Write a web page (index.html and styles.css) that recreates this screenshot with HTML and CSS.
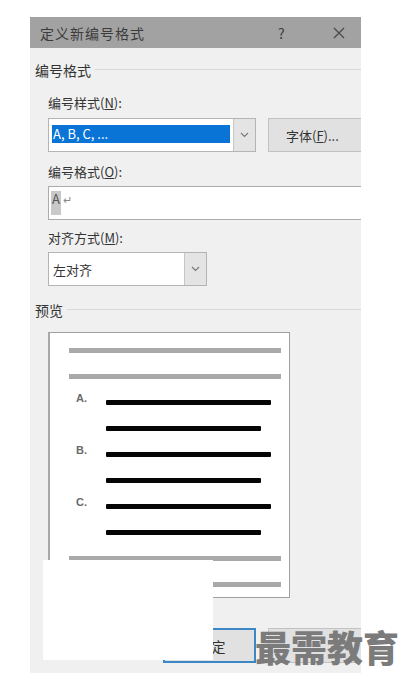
FILE: index.html
```html
<!DOCTYPE html>
<html lang="zh-CN">
<head>
    <meta charset="UTF-8">
    <meta name="viewport" content="width=device-width, initial-scale=1.0">
    <title>定义新编号格式</title>
    <link rel="stylesheet" href="styles.css">
</head>
<body>

<div class="page">
    <div class="dialog">
        <div class="titlebar">
            <span class="title">定义新编号格式</span>
            <span class="help">?</span>
            <svg class="close" width="12" height="12" viewBox="0 0 12 12">
                <path d="M1 1 L11 11 M11 1 L1 11" stroke="#4a4a4a" stroke-width="1.3" fill="none"/>
            </svg>
        </div>

        <div class="group-head">
            <span>编号格式</span>
            <div class="group-line"></div>
        </div>

        <div class="label label-first">编号样式(<u>N</u>):</div>
        <div class="row">
            <div class="combo combo-wide">
                <div class="combo-value"><span class="selected">A, B, C, ...</span></div>
                <div class="combo-btn">
                    <svg width="9" height="6" viewBox="0 0 9 6"><polyline points="1,1 4.5,4.5 8,1" stroke="#7a7a7a" stroke-width="1.2" fill="none"/></svg>
                </div>
            </div>
            <div class="btn font-btn">字体(<u>F</u>)...</div>
        </div>

        <div class="label">编号格式(<u>O</u>):</div>
        <div class="text-box"><span class="hl">A</span><span class="ret">↵</span></div>

        <div class="label label-tight">对齐方式(<u>M</u>):</div>
        <div class="combo combo-narrow">
            <div class="combo-value plain">左对齐</div>
            <div class="combo-btn">
                <svg width="9" height="6" viewBox="0 0 9 6"><polyline points="1,1 4.5,4.5 8,1" stroke="#7a7a7a" stroke-width="1.2" fill="none"/></svg>
            </div>
        </div>

        <div class="group-head preview-head">
            <span>预览</span>
            <div class="group-line"></div>
        </div>

        <div class="preview">
            <div class="pv-row"><div class="grey-line"></div></div>
            <div class="pv-row"><div class="grey-line"></div></div>
            <div class="pv-row item"><span class="num">A.</span><div class="black-line"></div></div>
            <div class="pv-row item"><span class="num"></span><div class="black-line short"></div></div>
            <div class="pv-row item"><span class="num">B.</span><div class="black-line"></div></div>
            <div class="pv-row item"><span class="num"></span><div class="black-line short"></div></div>
            <div class="pv-row item"><span class="num">C.</span><div class="black-line"></div></div>
            <div class="pv-row item"><span class="num"></span><div class="black-line short"></div></div>
            <div class="pv-row"><div class="grey-line"></div></div>
            <div class="pv-row"><div class="grey-line"></div></div>
        </div>

        <div class="buttons">
            <div class="btn ok-btn">确定</div>
            <div class="btn cancel-btn"></div>
        </div>
    </div>

    <div class="cover"></div>
    <div class="watermark">最需教育</div>
</div>

</body>
</html>
```

FILE: styles.css
```css
body {
    margin: 0;
    background: #fff;
    font-family: "Noto Sans CJK SC", "Noto Sans", sans-serif;
    color: #333;
}
.page {
    position: relative;
    width: 408px;
    height: 690px;
    padding-top: 17px;
    box-sizing: border-box;
}
.dialog {
    margin-left: 30px;
    width: 331px;
    height: 656px;
    background: #f0f0f0;
    overflow: hidden;
    display: flex;
    flex-direction: column;
}
.titlebar {
    height: 31px;
    flex-shrink: 0;
    background: #a2a2a2;
    display: flex;
    align-items: center;
    padding-left: 10px;
    color: #3c3c3c;
}
.title {
    font-size: 14px;
    letter-spacing: 1px;
}
.help {
    margin-left: auto;
    font-size: 14px;
    width: 12px;
}
.close {
    margin: 0 16px 0 43px;
}
.group-head {
    display: flex;
    align-items: center;
    margin-top: 12px;
    padding-left: 5px;
    font-size: 14px;
    line-height: 20px;
}
.group-line {
    flex: 1;
    height: 1px;
    background: #d8d8d8;
    margin-left: 4px;
    margin-top: -2px;
}
.label {
    padding-left: 18px;
    font-size: 13px;
    line-height: 20px;
    margin-top: 10px;
}
.label-first {
    margin-top: 13px;
}
.label-tight {
    margin-top: 8px;
}
.row {
    display: flex;
    margin-top: 5px;
    padding-left: 18px;
}
.combo {
    display: flex;
    flex-shrink: 0;
    height: 34px;
    box-sizing: border-box;
    border: 1px solid #b4b4b4;
    background: #fff;
}
.combo-wide {
    width: 208px;
}
.combo-narrow {
    width: 159px;
    margin: 4px 0 0 18px;
}
.combo-value {
    flex: 1;
    padding: 6px 3px 8px 3px;
    display: flex;
}
.selected {
    flex: 1;
    background: #0a74d6;
    color: #fff;
    font-size: 13px;
    line-height: 18px;
    padding-left: 1px;
}
.combo-value.plain {
    align-items: center;
    padding: 0 4px;
    font-size: 13px;
}
.combo-btn {
    width: 21px;
    background: #e4e4e4;
    border-left: 1px solid #c6c6c6;
    display: flex;
    align-items: center;
    justify-content: center;
}
.btn {
    height: 34px;
    box-sizing: border-box;
    background: #e1e1e1;
    border: 1px solid #c2c2c2;
    display: flex;
    align-items: center;
    font-size: 13px;
}
.font-btn {
    margin-left: 12px;
    width: 110px;
    flex-shrink: 0;
    padding-left: 17px;
}
.text-box {
    margin: 4px 0 0 18px;
    width: 330px;
    flex-shrink: 0;
    height: 34px;
    box-sizing: border-box;
    border: 1px solid #ababab;
    background: #fff;
    padding: 4px 2px;
    font-size: 13px;
    line-height: 16px;
    display: flex;
}
.hl {
    background: #c8c8c8;
    color: #555;
    padding: 0 1px;
}
.ret {
    color: #888;
    font-size: 11px;
    margin-left: 2px;
}
.preview-head {
    margin-top: 14px;
}
.preview {
    margin: 12px 0 0 18px;
    width: 242px;
    height: 266px;
    flex-shrink: 0;
    box-sizing: border-box;
    border: 1px solid #a0a0a0;
    border-left: 2px solid #a8a8a8;
    background: #fff;
    padding-top: 4px;
}
.pv-row {
    height: 26px;
    display: flex;
    align-items: center;
}
.grey-line {
    margin-left: 19px;
    width: 212px;
    height: 5px;
    background: #a9a9a9;
}
.item {
    padding-left: 26px;
}
.num {
    width: 30px;
    font-size: 11px;
    font-weight: bold;
    color: #6a6a6a;
    margin-top: -8px;
    font-family: "Liberation Sans", sans-serif;
}
.black-line {
    width: 165px;
    height: 5px;
    background: #050505;
    border-radius: 1px;
}
.black-line.short {
    width: 155px;
}
.buttons {
    display: flex;
    margin: 30px 0 0 133px;
}
.ok-btn {
    width: 93px;
    height: 35px;
    flex-shrink: 0;
    border: 2px solid #3c87c6;
    justify-content: center;
    padding-left: 4px;
    font-size: 14px;
}
.cancel-btn {
    width: 100px;
    height: 35px;
    margin-left: 12px;
    flex-shrink: 0;
}
.cover {
    position: absolute;
    left: 43px;
    top: 560px;
    width: 170px;
    height: 100px;
    background: #fff;
}
.watermark {
    position: absolute;
    left: 255px;
    top: 627px;
    font-size: 36px;
    line-height: 1.1;
    font-weight: 900;
    color: #7b7b7b;
}
```
